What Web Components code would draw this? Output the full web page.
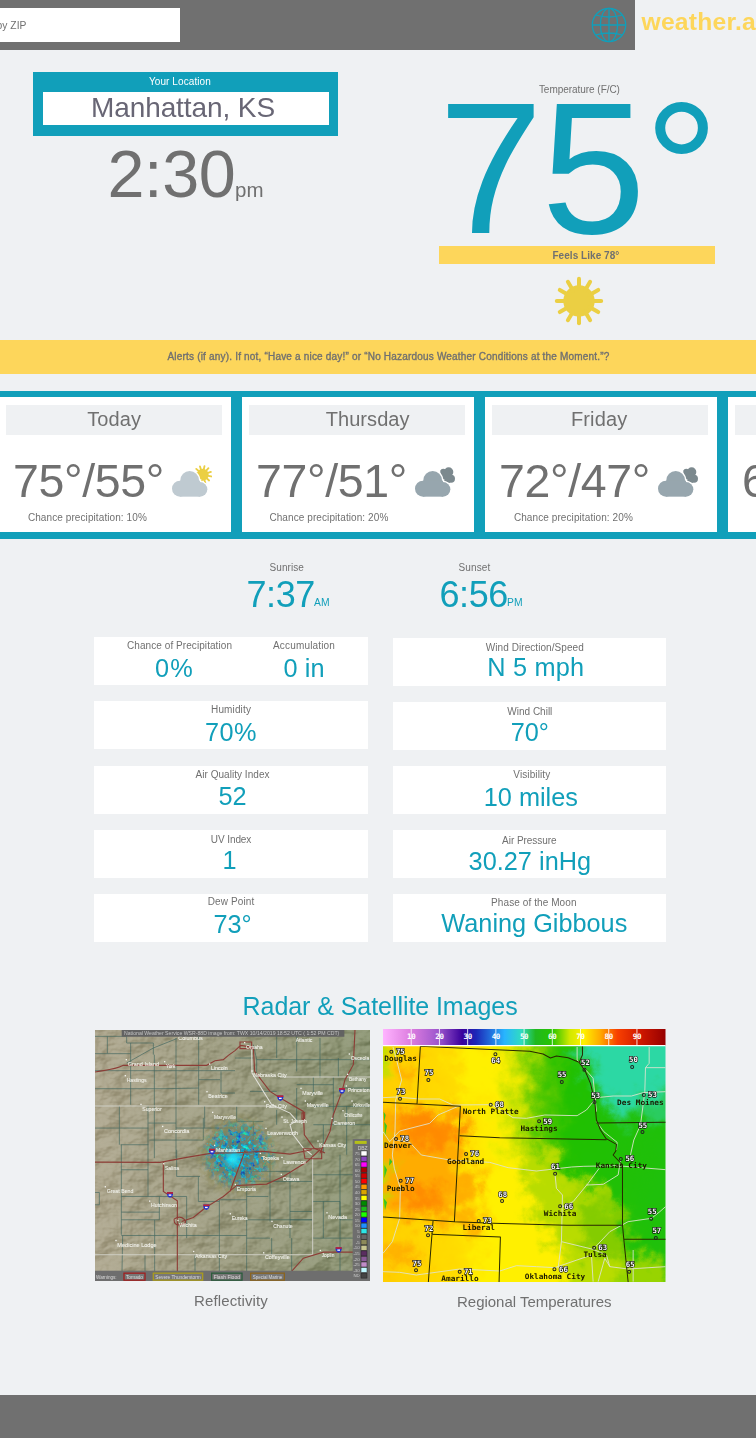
<!DOCTYPE html>
<html lang="en">
<head>
<meta charset="utf-8">
<title>weather.app</title>
<style>
html,body{margin:0;padding:0}
body{width:756px;height:1438px;overflow:hidden;background:#eff1f3;font-family:"Liberation Sans",Arial,sans-serif;color:#707070}
</style>
</head>
<body>
<weather-page></weather-page>
<script>
const define = (name, cls) => customElements.define(name, cls);
class Base extends HTMLElement {
  constructor() { super(); this.attachShadow({ mode: 'open' }); }
  a(n, d = '') { return this.getAttribute(n) ?? d; }
}

/* One line of type; w sets the line's measure through tracking. */
define('type-line', class extends Base {
  connectedCallback() {
    const size = +this.a('size', '10');
    this.shadowRoot.innerHTML = `<style>
      :host{display:block;flex:none;white-space:nowrap;font-size:${size}px;line-height:1;height:1em;width:max-content}
      span{display:inline-block}
    </style><span><slot></slot></span>`;
    const w = +this.a('w', '0');
    if (w) {
      const s = this.shadowRoot.querySelector('span');
      const n = this.textContent.length;
      const natural = s.getBoundingClientRect().width;
      if (natural) s.style.letterSpacing = ((w - natural) / n) + 'px';
      this.style.width = w + 'px';
    }
  }
});

define('globe-icon', class extends Base {
  connectedCallback() {
    this.shadowRoot.innerHTML = `<style>:host{display:block;width:36px;height:36px}</style>
    <svg width="36" height="36" viewBox="-18 -18 36 36" fill="none" stroke="#119fba" stroke-width="1.3">
      <circle r="16.7"/><ellipse rx="8.6" ry="16.7"/><path d="M0-16.7V16.7M-16.7 0H16.7M-13.4-10Q0-6 13.4-10M-13.4 10Q0 6 13.4 10"/>
    </svg>`;
  }
});

define('sun-icon', class extends Base {
  connectedCallback() {
    let rays = '';
    for (let i = 0; i < 12; i++) rays += `<path d="M0-12V-22.2" transform="rotate(${i * 30})"/>`;
    this.shadowRoot.innerHTML = `<style>:host{display:block;width:50px;height:50px}</style>
    <svg width="50" height="50" viewBox="-25 -25 50 50"><circle r="15.7" fill="#ebcf43"/><g stroke="#ebcf43" stroke-width="4" stroke-linecap="round">${rays}</g></svg>`;
  }
});

define('cloud-icon', class extends Base {
  connectedCallback() {
    const sunny = this.a('kind') === 'sunny';
    let rays = '';
    for (let i = 0; i < 12; i++) rays += `<path d="M0-14V-26" transform="translate(609 422) rotate(${i * 30 + 12})"/>`;
    const back = sunny
      ? `<circle cx="609" cy="422" r="18" fill="#ebcf43"/><g stroke="#ebcf43" stroke-width="5.5" stroke-linecap="round">${rays}</g>`
      : `<g fill="#7c898e"><circle cx="618" cy="414" r="14"/><circle cx="602" cy="413" r="9"/><circle cx="625" cy="434" r="12"/><path d="M594 408h24l14 27-12 12-24-10z"/></g>`;
    const cloud = `<circle cx="541" cy="464" r="24"/><circle cx="570" cy="439" r="28"/><circle cx="601" cy="466" r="22"/><path d="M541 440h60v48h-60z"/>`;
    this.shadowRoot.innerHTML = `<style>:host{display:block;width:42px;height:33px}</style>
    <svg width="42" height="33" viewBox="514 393 126 99">${back}<g fill="#fff" stroke="#fff" stroke-width="8">${cloud}</g><g fill="${sunny ? '#bfcad1' : '#97a6ae'}">${cloud}</g></svg>`;
  }
});

define('top-bar', class extends Base {
  connectedCallback() {
    this.shadowRoot.innerHTML = `<style>
      :host{display:flex;height:51px;overflow:hidden}
      .bar{width:635.4px;height:50.4px;background:#707070;display:flex;justify-content:space-between;box-sizing:border-box;padding:6.5px 7.5px 0 0}
      .zip{width:180.4px;height:34px;margin-top:1px;background:#fff;box-sizing:border-box;padding:13px 0 0}
      .zip type-line{margin-left:-3.5px}
      b{display:block;padding:10px 0 0 6.6px;color:#fdd65b}
    </style>
    <div class="bar"><div class="zip"><type-line size="10.3" w="30">by ZIP</type-line></div><globe-icon></globe-icon></div>
    <b><type-line size="24.7" w="114.5">weather.a</type-line></b>`;
  }
});

define('place-clock', class extends Base {
  connectedCallback() {
    this.shadowRoot.innerHTML = `<style>
      :host{display:block;width:305px;padding:21.4px 0 0 33.4px}
      .box{background:#119fba;height:63.5px;box-sizing:border-box;padding:5px 9.5px 0 10px;color:#fff}
      .box>type-line{margin:0 0 5px 105.5px}
      .name{background:#fff;height:32.5px;color:#686675;display:flex;padding:2px 0 0 47.6px;box-sizing:border-box}
      .time{display:flex;margin:5.6px 0 0 74px}
      .time type-line+type-line{margin:38.5px 0 0 -.5px}
    </style>
    <div class="box"><type-line w="62">Your Location</type-line><div class="name"><type-line size="28" w="184">Manhattan, KS</type-line></div></div>
    <div class="time"><type-line size="66.5" w="128">2:30</type-line><type-line size="20.5" w="29">pm</type-line></div>`;
  }
});

define('current-temp', class extends Base {
  connectedCallback() {
    this.shadowRoot.innerHTML = `<style>
      :host{display:flex;flex-direction:column;align-items:center;width:276px;padding-top:34px}
      .deg{color:#119fba;align-self:flex-start;margin:-21px 0 0 -1px;height:171.6px}
      .feels{align-self:stretch;height:18px;background:#fdd65b;display:flex;justify-content:center;font-weight:700}
      .feels type-line{margin:5px 0 0 17px}
      sun-icon{margin:12px 0 0 3px}
    </style>
    <type-line w="81" style="margin-left:4px">Temperature (F/C)</type-line>
    <div class="deg"><type-line size="188" w="279">75°</type-line></div>
    <div class="feels"><type-line w="67">Feels Like 78°</type-line></div>
    <sun-icon></sun-icon>`;
  }
});

define('alert-band', class extends Base {
  connectedCallback() {
    this.shadowRoot.innerHTML = `<style>
      :host{display:flex;justify-content:center;height:33.5px;background:#fdd65b;-webkit-text-stroke:.35px #707070}
      type-line{margin:12px 0 0 21px}
    </style><type-line w="442">Alerts (if any). If not, “Have a nice day!” or “No Hazardous Weather Conditions at the Moment.”?</type-line>`;
  }
});

define('day-card', class extends Base {
  connectedCallback() {
    this.shadowRoot.innerHTML = `<style>
      :host{display:block;flex:none;width:231.5px;height:135px;background:#fff;box-sizing:border-box;padding:8.5px 0 0 6.5px}
      .day{width:216.5px;height:30px;background:#eff1f3;display:flex;justify-content:center;box-sizing:border-box;padding-top:4px}
      .row{display:flex;height:46px;margin:22.6px 0 0 7.2px}
      cloud-icon{margin:7px 0 0 6.5px}
    </style>
    <div class="day"><type-line size="20" w="${this.a('dw')}" style="margin-left:${this.a('shift', '0')}px">${this.a('day')}</type-line></div>
    <div class="row"><type-line size="46.5" w="151">${this.a('temps')}</type-line><cloud-icon kind="${this.a('kind')}"></cloud-icon></div>
    <type-line w="119" style="margin:9px 0 0 ${this.a('px')}px">Chance precipitation: ${this.a('rain')}%</type-line>`;
  }
});

define('forecast-strip', class extends Base {
  connectedCallback() {
    this.shadowRoot.innerHTML = `<style>
      :host{display:flex;gap:11.5px;height:148px;box-sizing:border-box;padding:6px 0 0;background:#119fba;overflow:hidden}
      ::slotted(:first-child){margin-left:-.6px}
    </style><slot></slot>`;
  }
});

define('sun-time', class extends Base {
  connectedCallback() {
    this.shadowRoot.innerHTML = `<style>
      :host{display:block;width:84px}
      .t{display:flex;color:#119fba;margin-top:4px}
      .t type-line+type-line{margin:21px 0 0 -.8px}
    </style>
    <type-line w="${this.a('lw')}" style="margin-left:${this.a('lx')}px">${this.a('label')}</type-line>
    <div class="t"><type-line size="36" w="68.4">${this.a('time')}</type-line><type-line size="10.3" w="15.5">${this.a('half')}</type-line></div>`;
  }
});

/* A label over its reading. */
define('metric-pair', class extends Base {
  connectedCallback() {
    this.shadowRoot.innerHTML = `<style>
      :host{display:flex;flex-direction:column;align-items:center}
      .v{color:#119fba;margin-left:${this.a('vs', '0')}px;margin-top:${this.a('gap', '4.5')}px}
      .l{margin-left:${this.a('ls', '0')}px;margin-top:${this.a('top', '4')}px}
    </style>
    <div class="l"><type-line w="${this.a('lw')}">${this.a('label')}</type-line></div>
    <div class="v"><type-line size="25.3" w="${this.a('vw')}">${this.a('value')}</type-line></div>`;
  }
});

define('metric-tile', class extends Base {
  connectedCallback() {
    this.shadowRoot.innerHTML = `<style>
      :host{display:flex;justify-content:center;height:48px;width:273.3px;background:#fff}
    </style><slot></slot>`;
  }
});

define('metric-column', class extends Base {
  connectedCallback() {
    this.shadowRoot.innerHTML = `<style>:host{display:flex;flex-direction:column;gap:16.1px}</style><slot></slot>`;
  }
});

/* Terrain, county lines, roads and the reflectivity echo. */
define('radar-map', class extends Base {
  connectedCallback() {
    const cities = [['Columbus',265,46,73],['Grand Island',113,124,94],['York',228,130,28],['Lincoln',363,137,50],['Hastings',110,172,60],['Beatrice',355,220,58],['Superior',157,258,58],['Marysville',372,282,66],['Concordia',222,324,76],['Manhattan',378,381,72],['Omaha',468,73,50],['Atlantic',617,52,50],['Osceola',782,107,56],['Nebraska City',490,158,100],['Bethany',777,168,52],['Princeton',773,203,66],['Maryville',637,210,62],['Falls City',528,250,62],['Maysville',650,248,66],['Kirksville',790,248,50],['Chillicothe',763,277,54],['Cameron',730,300,66],['St. Joseph',580,296,70],['Leavenworth',532,330,92],['Kansas City',688,368,80],['Salina',225,436,42],['Great Bend',50,505,80],['Hutchinson',183,548,78],['Wichita',268,606,52],['Medicine Lodge',82,666,118],['Arkansas City',315,699,96],['Topeka',515,405,52],['Lawrence',580,417,68],['Ottawa',578,468,50],['Emporia',440,498,58],['Eureka',425,586,48],['Chanute',550,609,58],['Nevada',715,583,56],['Coffeyville',525,703,74],['Joplin',695,696,38]];
    const legend = [['75','#fff'],['70','#8a45c0'],['65','#f0f'],['60','#a00'],['55','#d00000'],['50','#f00'],['45','#f90'],['40','#d9a500'],['35','#ff0'],['30','#008a00'],['25','#1cb81c'],['20','#1cff00'],['15','#00f'],['10','#1f8fff'],['5','#2de5e5'],['0','#666'],['-5','#8d8a5a'],['-10','#c8c690'],['-15','#5a2d60'],['-20','#8a5a98'],['-25','#c08cc8'],['-30','#c0f8ff'],['ND','#444']];
    const boxes = [['Tornado',102,63,'#a02020'],['Severe Thunderstorm',190,148,'#a89a20'],['Flash Flood',365,91,'#2c5c3c'],['Special Marine',482,101,'#8a6420']];
    const shields = [[366,380],[571,220],[756,198],[240,510],[349,547],[746,675]];
    this.shadowRoot.innerHTML = `<style>:host,svg{display:block}text{font:17px "Liberation Sans",sans-serif;fill:#f0f0ea}</style>
    <svg width="275" height="251.5" viewBox="15 16 825 754" preserveAspectRatio="none">
      <defs>
        <linearGradient id="land"><stop offset="0" stop-color="#b0a991"/><stop offset=".45" stop-color="#a09f84"/><stop offset="1" stop-color="#8e9776"/></linearGradient>
        <filter id="relief" x="0" y="0" width="1" height="1" color-interpolation-filters="sRGB"><feTurbulence type="fractalNoise" baseFrequency=".012 .017" numOctaves="4" seed="7"/><feDiffuseLighting surfaceScale="22" diffuseConstant=".62" lighting-color="#fff"><feDistantLight azimuth="225" elevation="52"/></feDiffuseLighting></filter>
        <filter id="speck" x="-.1" y="-.1" width="1.2" height="1.2" color-interpolation-filters="sRGB"><feTurbulence type="fractalNoise" baseFrequency=".075" numOctaves="3" seed="3" result="n"/><feColorMatrix values="0 0 0 0 .05  0 1.3 0 0 0  0 0 .6 0 .5  8 0 0 0 -3.7" result="c"/><feComposite in="c" in2="SourceGraphic" operator="in"/></filter>
        <filter id="dust" x="-.1" y="-.1" width="1.2" height="1.2" color-interpolation-filters="sRGB"><feTurbulence type="fractalNoise" baseFrequency=".06" numOctaves="3" seed="9"/><feColorMatrix values="0 0 0 0 .56  0 0 0 0 .54  0 0 0 0 .3  6 0 0 0 -2.3" result="c"/><feComposite in="c" in2="SourceGraphic" operator="in"/></filter>
        <radialGradient id="fade"><stop offset="0" stop-color="#fff"/><stop offset=".55" stop-color="#fff" stop-opacity=".8"/><stop offset="1" stop-color="#fff" stop-opacity="0"/></radialGradient>
        <radialGradient id="haze"><stop offset="0" stop-color="#4c7478" stop-opacity=".9"/><stop offset=".6" stop-color="#5c7c78" stop-opacity=".65"/><stop offset="1" stop-color="#83855f" stop-opacity="0"/></radialGradient>
        <radialGradient id="glow"><stop offset="0" stop-color="#2cf0ff"/><stop offset=".5" stop-color="#18d0f0" stop-opacity=".7"/><stop offset="1" stop-color="#18a8c8" stop-opacity="0"/></radialGradient>
      </defs>
      <rect x="15" y="15" width="826" height="756" fill="url(#land)"/>
      <rect x="15" y="15" width="826" height="756" filter="url(#relief)" style="mix-blend-mode:soft-light" opacity=".62"/>
      <g fill="none" stroke="#39625c" stroke-width="2.2" opacity=".85">
        <path d="M15 35H110V55H190V90M52 35V86M15 87H122M122 55V240M193 90V400M258 40V400M326 35V240M15 138H326M15 192H225L326 190M110 115L190 70L260 42M88 244V360M15 310H175M174 244V375M175 295H258M178 346H340V280M92 360H175M94 360V630M94 435H174M174 375V515M94 515H290M208 515V585H94M94 562H208M194 585V740M290 515V640M94 632H385M388 640V525M385 632H470M326 138H435M326 165H390M393 140V205H435M344 244V310M258 310H430M260 375V455H330M325 455V530H388M388 525H470M470 400V740M15 503H28V540H15M98 632L96 740M165 690V740M315 690V740M388 640V740"/>
        <path d="M435 100H490M490 60L500 105H840M500 105V157M560 15V100M620 15V140M690 40V160M745 100V157M670 157V210M620 180H730M730 157V300M480 200H560M440 245V290H520M490 290V390M560 255V300M620 190V290M670 245H840M670 300H840M840 190H760M770 245V390M700 300V385M435 440H600M540 400V590M600 440V640M470 470H668M470 585H668M540 640H470M600 560H668M668 450H840M668 530H750V585H840M700 530V640M750 390V740M668 640H790M545 640V690M600 585H668M470 515H535M605 640V740"/>
      </g>
      <g fill="none" stroke="#cfcfc5" stroke-width="3"><path d="M15 244H545M570 157H840M15 690H668M668 395V690"/><path d="M485 70L486 145L520 200L545 240L600 265L620 288L600 300L608 328L640 370L665 390" stroke="#e0e0da"/></g>
      <circle cx="444" cy="392" r="135" fill="url(#fade)" filter="url(#dust)"/>
      <circle cx="442" cy="392" r="110" fill="url(#haze)"/>
      <ellipse cx="446" cy="388" rx="118" ry="112" fill="url(#fade)" filter="url(#speck)"/>
      <circle cx="430" cy="402" r="38" fill="url(#glow)"/>
      <g stroke="#18d0f0" stroke-width="2.6" opacity=".6"><path d="M430 400L350 355M430 400L395 318M430 400L440 300M430 400L490 325M430 400L530 380M430 400L515 440M430 400L470 470M430 400L400 455M430 400L520 350" stroke-dasharray="9 8 14 5 4 11"/></g>
      <g fill="none" stroke="#8d3d36" stroke-width="3.4"><path d="M15 142C45 136 70 137 100 122H350L375 108L400 105L415 92L435 78L452 62L490 68L494 140L540 200L571 220L640 260L643 330L672 370L705 385M450 52h35v20h-35zM795 15L790 120L765 165L756 200L730 270L720 320L690 385M636 265v18h8v-20z"/><path d="M15 412L210 413L290 398L366 385L440 384L520 380L600 388L665 375M220 412V500L262 528V740M350 546L310 578L275 590M349 547L400 515L440 482L530 478L580 455L650 412L690 375M252 583q18-12 30 0t-8 16q-22 6-22-16M640 372h55v30h-50zM600 745L640 700L700 682H840M465 378L420 500"/></g>
      ${shields.map(([x, y]) => `<path d="M${x - 9} ${y - 8}h18v8q-2 8-9 9q-7-1-9-9z" fill="#2433cc"/><path d="M${x - 9} ${y - 8}h18v5h-18z" fill="#c02030"/><path d="M${x - 4} ${y + 1}h8" stroke="#fff" stroke-width="4"/>`).join('')}
      ${cities.map(([t, x, y, w]) => `<rect x="${x - 6}" y="${y - 21}" width="4" height="4" fill="#f4f4f0"/><text x="${x}" y="${y}" textLength="${w}" lengthAdjust="spacingAndGlyphs" stroke="#f0f0ea" stroke-width=".3">${t}</text>`).join('')}
      <path d="M95 15h668v21H95z" fill="#626262"/><text x="102" y="31" textLength="646" lengthAdjust="spacingAndGlyphs" style="fill:#c4c4c4">National Weather Service WSR-88D image from: TWX 10/14/2019 18:52 UTC ( 1:52 PM CDT)</text>
      <path d="M788 343h53v430h-53zM15 738h826v34H15z" fill="#6e6e6e"/>
      <path d="M794 353h36" stroke="#b5c018" stroke-width="9"/><text x="803" y="375" style="font-size:15px;fill:#ccc">DBZ</text>
      ${legend.map(([t, c], i) => `<rect x="813" y="${378.5 + i * 16.65}" width="18" height="15" fill="${c}" stroke="#222" stroke-width="1.5"/><text x="809" y="${391 + i * 16.65}" text-anchor="end" style="font-size:13px;fill:#ccc">${t}</text>`).join('')}
      <text x="18" y="762" textLength="62" lengthAdjust="spacingAndGlyphs" style="font-size:15px;fill:#ddd">Warnings:</text>
      ${boxes.map(([t, x, w, c]) => `<rect x="${x}" y="745" width="${w}" height="21" fill="#777" stroke="${c}" stroke-width="4"/><text x="${x + 6}" y="762" textLength="${w - 12}" lengthAdjust="spacingAndGlyphs" style="font-size:15px;fill:#ddd">${t}</text>`).join('')}
    </svg>`;
  }
});

define('temperature-map', class extends Base {
  connectedCallback() {
    const points = [['75',35,80,62,86],['75',146,165,148,151],['64',347,88,348,114],['73',61,221,64,207],['68',333,239,359,246],['59',478,289,504,296],['55',546,171,547,157],['52',614,134,617,121],['50',757,126,761,112],['53',644,231,648,218],['53',792,210,818,217],['55',788,321,789,308],['78',49,342,75,348],['76',259,387,285,393],['77',63,467,90,474],['68',367,528,369,515],['61',526,446,527,432],['66',541,544,567,551],['56',723,402,750,409],['55',814,581,817,567],['57',828,639,831,625],['73',297,588,323,595],['72',145,631,148,617],['75',109,736,112,723],['71',240,740,266,747],['66',524,733,551,741],['63',643,668,669,675],['65',748,740,751,726]];
    const names = [['Douglas',14,109],['North Platte',249,267],['Hastings',422,317],['Denver',13,369],['Des Moines',712,239],['Goodland',202,416],['Pueblo',21,497],['Kansas City',648,430],['Wichita',492,573],['Liberal',248,615],['Tulsa',611,696],['Amarillo',185,769],['Oklahoma City',435,763]];
    let scale = '';
    for (let i = 1; i < 10; i++) scale += `<path d="M${10 + i * 84.6} 12V60" stroke="#fff" stroke-width="2.5"/><text class="s" x="${10 + i * 84.6}" y="42">${i * 10}</text>`;
    this.shadowRoot.innerHTML = `<style>:host,svg{display:block}text{font:bold 22.5px "DejaVu Sans Mono",monospace}.n,.s{fill:#fff;stroke:#111;stroke-width:4;paint-order:stroke;text-anchor:middle}.s{stroke:none;letter-spacing:-1px}.n{font-size:22px}</style>
    <svg width="282.5" height="253" viewBox="10 12 847 759" preserveAspectRatio="none">
      <defs>
        <linearGradient id="bar"><stop offset="0" stop-color="#ffb4ff"/><stop offset=".1" stop-color="#dc7cdf"/><stop offset=".2" stop-color="#9a54cc"/><stop offset=".28" stop-color="#3a009c"/><stop offset=".33" stop-color="#1c28b8"/><stop offset=".43" stop-color="#28b4ff"/><stop offset=".49" stop-color="#30dcc0"/><stop offset=".54" stop-color="#20b820"/><stop offset=".6" stop-color="#28c400"/><stop offset=".66" stop-color="#d0e800"/><stop offset=".71" stop-color="#fff000"/><stop offset=".77" stop-color="#ffa800"/><stop offset=".83" stop-color="#f84000"/><stop offset=".91" stop-color="#d01800"/><stop offset="1" stop-color="#960000"/></linearGradient>
        <linearGradient id="field"><stop offset="0" stop-color="#ffc800"/><stop offset=".3" stop-color="#ffdc00"/><stop offset=".42" stop-color="#fff000"/><stop offset=".48" stop-color="#c0e000"/><stop offset=".54" stop-color="#58c800"/><stop offset=".62" stop-color="#20c000"/><stop offset="1" stop-color="#1fc010"/></linearGradient>
        <filter id="rough" x="-.1" y="-.1" width="1.2" height="1.2" color-interpolation-filters="sRGB"><feGaussianBlur stdDeviation="17" result="b"/><feTurbulence type="fractalNoise" baseFrequency=".02" numOctaves="5" seed="5" result="t"/><feDisplacementMap in="b" in2="t" scale="110" xChannelSelector="R" yChannelSelector="G"/></filter>
        <clipPath id="area"><path d="M10 64h847v707H10z"/></clipPath>
      </defs>
      <rect x="10" y="12" width="847" height="50" fill="url(#bar)"/><path d="M10 62h847" stroke="#fff" stroke-width="4"/>${scale}
      <g clip-path="url(#area)">
        <g filter="url(#rough)">
          <rect x="-100" y="-20" width="1080" height="900" fill="url(#field)"/>
          <path d="M390 400L500 350L560 460L650 480L730 560L740 880H390z" fill="#b8dc00"/>
          <path d="M330 410L430 390L450 540L500 620L560 700L560 880H280z" fill="#fff000"/>
          <path d="M580 500L740 560L740 720L620 690z" fill="#84cc00"/>
          <path d="M580 -10H980V280L720 290L660 220L590 110z" fill="#2acc60"/>
          <path d="M620 -20H970V170L820 200L740 260L680 230L640 150z" fill="#2cd8a4"/>
          <path d="M-40 250H250V440L230 600L150 580L-30 570z" fill="#ffac00"/>
          <path d="M60 270H190V360H80zM70 490h110v60h-110zM180 300h70v50h-70z" fill="#ff8a00"/>
          <path d="M180 560h120v50h-120zM20 660h90v60h-90zM60 110h60v60h-60zM240 440h60v80h-60z" fill="#ffb000"/>
          <path d="M190 90H250V210H350V64H200z" fill="#fff000"/>
          <path d="M-40 60H20V170H-20zM-40 280H8V350H-40zM-40 400H18V440L8 560H-40z" fill="#b8e000"/>
          <path d="M740 700h120v100H740z" fill="#98d400"/>
        </g>
        <path d="M12 260l6 10-4 20 8 12-6 30zM30 400l8 10-10 12zM12 520l10 12-6 24zM14 420l8 14-8 26z" fill="#35c820"/>
        <g fill="none" stroke="#dfe3d0" stroke-width="2.6">
          <path d="M10 218L50 216L120 222L180 222L220 240L335 239L375 262L400 278L440 280L495 270L592 272L620 255L650 218L700 213L755 213L790 203L857 200"/>
          <path d="M40 66L52 110L66 165L48 225L46 320L38 390L44 430L62 490L60 580L38 650L10 685M240 242L175 270L150 295L60 318L30 350L10 320M45 345L90 352L125 390L210 405L330 412L385 428L470 438L575 426L610 424L710 422L857 434M592 66V105L640 160L650 260M808 66V115L797 128H857M797 128L795 200L782 300L762 345L752 390M526 450L530 490L548 510L545 650L535 730M548 545L580 530L625 475L658 430M620 480L670 478L715 450L722 405M545 650L640 673L690 620L745 590L815 580L840 560L857 545M10 740L60 742L110 750L240 732L360 738L410 722L470 725L525 728L635 690L640 770M655 770L675 700L690 725L745 732L857 725M760 675V770M690 725L680 690L640 673M650 290L672 320L712 352L710 375"/>
        </g>
        <g fill="none" stroke="#282800" stroke-width="3" stroke-linejoin="round">
          <path d="M122 64L450 79L490 87L512 99L530 93L565 98L598 112L615 135L632 175L645 230L650 285L662 315L678 340L710 358L708 378L700 390L728 420V600M122 64L112 237M10 232L242 244L234 400L224 590M240 332L360 338L680 344M650 294L857 292M608 64V90L598 112M10 576L224 590L340 595L560 601H728M728 600L732 643H857M732 643L745 771M160 588L152 690L146 771M155 628L362 636L358 771"/>
        </g>
        ${names.map(([t, x, y]) => `<text x="${x}" y="${y}" fill="#1a1800" textLength="${t.length * 13.95}" lengthAdjust="spacingAndGlyphs">${t}</text>`).join('')}
        ${points.map(([t, x, y, tx, ty]) => `<circle cx="${x}" cy="${y}" r="4.5" fill="none" stroke="#222" stroke-width="3"/><text class="n" x="${tx}" y="${ty}">${t}</text>`).join('')}
      </g>
    </svg>`;
  }
});

define('weather-page', class extends Base {
  connectedCallback() {
    this.shadowRoot.innerHTML = `<style>
      :host{display:flex;flex-direction:column;width:756px;height:1438px;overflow:hidden;background:#eff1f3}
      .hero{display:flex;justify-content:space-between;height:289.4px;padding-right:40.6px}
      .strip{margin-top:17px}
      .suns{display:flex;gap:109px;margin:24.6px 0 0 246.5px;height:73.9px}
      .metrics{display:flex;gap:25.5px;padding-left:94.4px;height:305px}
      .metrics metric-column+metric-column{margin-top:.6px}
      h2{margin:51.5px 0 0 242.6px;font-weight:400;color:#119fba;height:35px}
      .maps{display:flex;gap:13px;padding-left:95px}
      figure{margin:0}
      figure radar-map{margin-top:1px}
      footer{height:43.5px;margin-top:auto;background:#707070}
    </style>
    <top-bar></top-bar>
    <div class="hero"><place-clock></place-clock><current-temp></current-temp></div>
    <alert-band></alert-band>
    <forecast-strip class="strip">
      <day-card day="Today" dw="54" temps="75°/55°" rain="10" px="22" kind="sunny"></day-card>
      <day-card day="Thursday" dw="84" shift="21" temps="77°/51°" rain="20" px="20.5" kind="cloudy"></day-card>
      <day-card day="Friday" dw="56.5" shift="-2" temps="72°/47°" rain="20" px="22" kind="cloudy"></day-card>
      <day-card day="" temps="6" rain="" px="60" kind="cloudy"></day-card>
    </forecast-strip>
    <div class="suns">
      <sun-time label="Sunrise" lw="34.5" lx="23" time="7:37" half="AM"></sun-time>
      <sun-time label="Sunset" lw="32" lx="19" time="6:56" half="PM"></sun-time>
    </div>
    <div class="metrics">
      <metric-column>
        <metric-tile><metric-pair label="Chance of Precipitation" lw="105" value="0%" vw="39" vs="-10" style="margin-left:0"></metric-pair><metric-pair label="Accumulation" lw="62" value="0 in" vw="41" style="margin-left:41px"></metric-pair></metric-tile>
        <metric-tile><metric-pair label="Humidity" lw="40" value="70%" vw="52"></metric-pair></metric-tile>
        <metric-tile><metric-pair label="Air Quality Index" lw="74" ls="3" value="52" vw="28" vs="3"></metric-pair></metric-tile>
        <metric-tile><metric-pair label="UV Index" lw="40.5" top="5" gap="3.5" value="1" vw="14" vs="-3"></metric-pair></metric-tile>
        <metric-tile><metric-pair label="Dew Point" lw="46.5" top="3" gap="5.5" value="73°" vw="38" vs="3"></metric-pair></metric-tile>
      </metric-column>
      <metric-column>
        <metric-tile><metric-pair label="Wind Direction/Speed" lw="98" ls="10" top="5.5" gap="2" value="N 5 mph" vw="97" vs="12"></metric-pair></metric-tile>
        <metric-tile><metric-pair label="Wind Chill" lw="45" top="4.5" gap="3.5" value="70°" vw="38"></metric-pair></metric-tile>
        <metric-tile><metric-pair label="Visibility" lw="37" ls="4" top="4" gap="5" value="10 miles" vw="94" vs="2"></metric-pair></metric-tile>
        <metric-tile><metric-pair label="Air Pressure" lw="54.5" ls="-1" top="5.5" gap="3.5" value="30.27 inHg" vw="122.5"></metric-pair></metric-tile>
        <metric-tile><metric-pair label="Phase of the Moon" lw="85.5" ls="8" top="3.5" gap="3.5" value="Waning Gibbous" vw="186" vs="9"></metric-pair></metric-tile>
      </metric-column>
    </div>
    <h2><type-line size="25" w="275">Radar &amp; Satellite Images</type-line></h2>
    <div class="maps">
      <figure><radar-map></radar-map><type-line size="15" w="74" style="margin:11.5px 0 0 99px">Reflectivity</type-line></figure>
      <figure><temperature-map></temperature-map><type-line size="15" w="154.5" style="margin:12px 0 0 74px">Regional Temperatures</type-line></figure>
    </div>
    <footer></footer>`;
  }
});
</script>
</body>
</html>
